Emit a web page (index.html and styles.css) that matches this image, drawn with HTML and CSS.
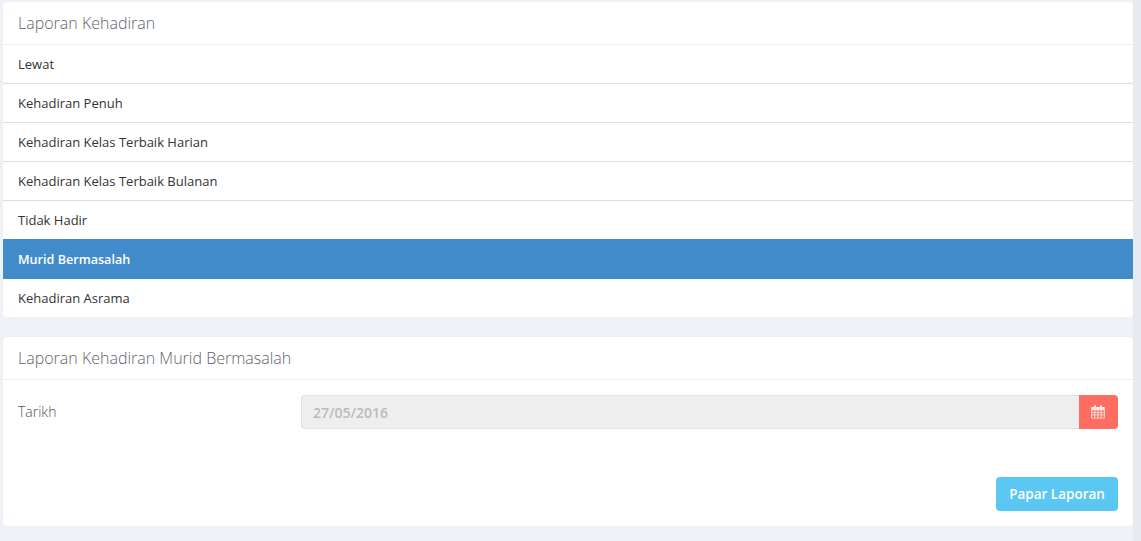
FILE: index.html
```html
<!DOCTYPE html>
<html lang="en">
<head>
    <meta charset="UTF-8">
    <meta name="viewport" content="width=device-width, initial-scale=1.0">
    <title>Laporan Kehadiran</title>
    <link rel="stylesheet" href="styles.css">
</head>
<body>

    <div class="panel report-list">
        <div class="panel-heading">Laporan Kehadiran</div>
        <a class="list-item">Lewat</a>
        <a class="list-item">Kehadiran Penuh</a>
        <a class="list-item">Kehadiran Kelas Terbaik Harian</a>
        <a class="list-item">Kehadiran Kelas Terbaik Bulanan</a>
        <a class="list-item">Tidak Hadir</a>
        <a class="list-item active">Murid Bermasalah</a>
        <a class="list-item">Kehadiran Asrama</a>
    </div>

    <div class="panel report-form">
        <div class="panel-heading">Laporan Kehadiran Murid Bermasalah</div>
        <div class="panel-body">
            <div class="form-row">
                <label class="form-label">Tarikh</label>
                <div class="input-group">
                    <input class="form-input" type="text" value="27/05/2016" disabled>
                    <button class="date-button" type="button" aria-label="Pilih tarikh">
                        <svg class="calendar-icon" viewBox="0 0 14 14" width="14" height="14">
                            <path fill="currentColor" fill-opacity="0.85" fill-rule="evenodd" d="M1.2 2H3V1.2C3 .6 3.4.2 4 .2S5 .6 5 1.2V2h4v-.8C9 .6 9.4.2 10 .2s1 .4 1 1V2h1.8c.6 0 1 .4 1 1v9.6c0 .6-.4 1-1 1H1.2c-.6 0-1-.4-1-1V3c0-.6.4-1 1-1zM1.1 5.2v1.7h2.2V5.2zM4.2 5.2v1.7h2.3V5.2zM7.4 5.2v1.7h2.3V5.2zM10.6 5.2v1.7h2.3V5.2zM1.1 7.7v1.8h2.2V7.7zM4.2 7.7v1.8h2.3V7.7zM7.4 7.7v1.8h2.3V7.7zM10.6 7.7v1.8h2.3V7.7zM1.1 10.3v2.4h2.2v-2.4zM4.2 10.3v2.4h2.3v-2.4zM7.4 10.3v2.4h2.3v-2.4zM10.6 10.3v2.4h2.3v-2.4z"/>
                        </svg>
                    </button>
                </div>
            </div>
            <div class="form-actions">
                <button class="submit-button" type="button">Papar Laporan</button>
            </div>
        </div>
    </div>

</body>
</html>
```

FILE: styles.css
```css
body {
    margin: 0;
    padding: 2px 8px 15px 3px;
    font-family: 'Open Sans', sans-serif;
    font-size: 13px;
    background: linear-gradient(to left, #e8eaf0 8px, #eff1f6 8px);
}

.panel {
    background-color: #fff;
    border-radius: 4px;
    overflow: hidden;
}

.report-list {
    margin-bottom: 20px;
}

.panel-heading {
    height: 42px;
    line-height: 42px;
    padding: 0 15px;
    font-size: 16px;
    font-weight: 300;
    color: #5f6469;
    border-bottom: 1px solid #f0f1f4;
}

.list-item {
    display: block;
    height: 38px;
    line-height: 38px;
    padding: 0 15px;
    color: #333;
    border-bottom: 1px solid #ddd;
}

.list-item:last-child {
    border-bottom: none;
}

/* pulled up over the border of the row above */
.list-item.active {
    height: 40px;
    line-height: 41px;
    margin-top: -1px;
    background-color: #428bca;
    color: #fff;
    font-size: 12.6px;
    font-weight: 600;
    border-bottom: none;
}

.panel-body {
    padding: 15px;
}

.form-row {
    display: flex;
    align-items: center;
}

.form-label {
    width: 283px;
    font-size: 14px;
    font-weight: 300;
    color: #555;
    margin-top: -1px;
}

.input-group {
    flex: 1;
    display: flex;
    height: 34px;
}

.form-input {
    flex: 1;
    min-width: 0;
    box-sizing: border-box;
    height: 34px;
    padding: 0 11px;
    font-family: inherit;
    font-size: 14px;
    font-weight: 600;
    color: #bbb;
    background-color: #eee;
    border: 1px solid #e2e2e2;
    border-right: none;
    border-radius: 4px 0 0 4px;
}

.date-button {
    width: 39px;
    padding: 0 1px 0 0;
    display: flex;
    align-items: center;
    justify-content: center;
    color: #fff;
    background-color: #ff6c60;
    border: none;
    border-radius: 0 4px 4px 0;
}

.calendar-icon {
    display: block;
}

.form-actions {
    display: flex;
    justify-content: flex-end;
    margin-top: 48px;
}

.submit-button {
    width: 122px;
    height: 34px;
    padding: 0;
    font-family: inherit;
    font-size: 13.5px;
    font-weight: 600;
    color: #fff;
    background-color: #5bc8f3;
    border: none;
    border-radius: 4px;
}
```
